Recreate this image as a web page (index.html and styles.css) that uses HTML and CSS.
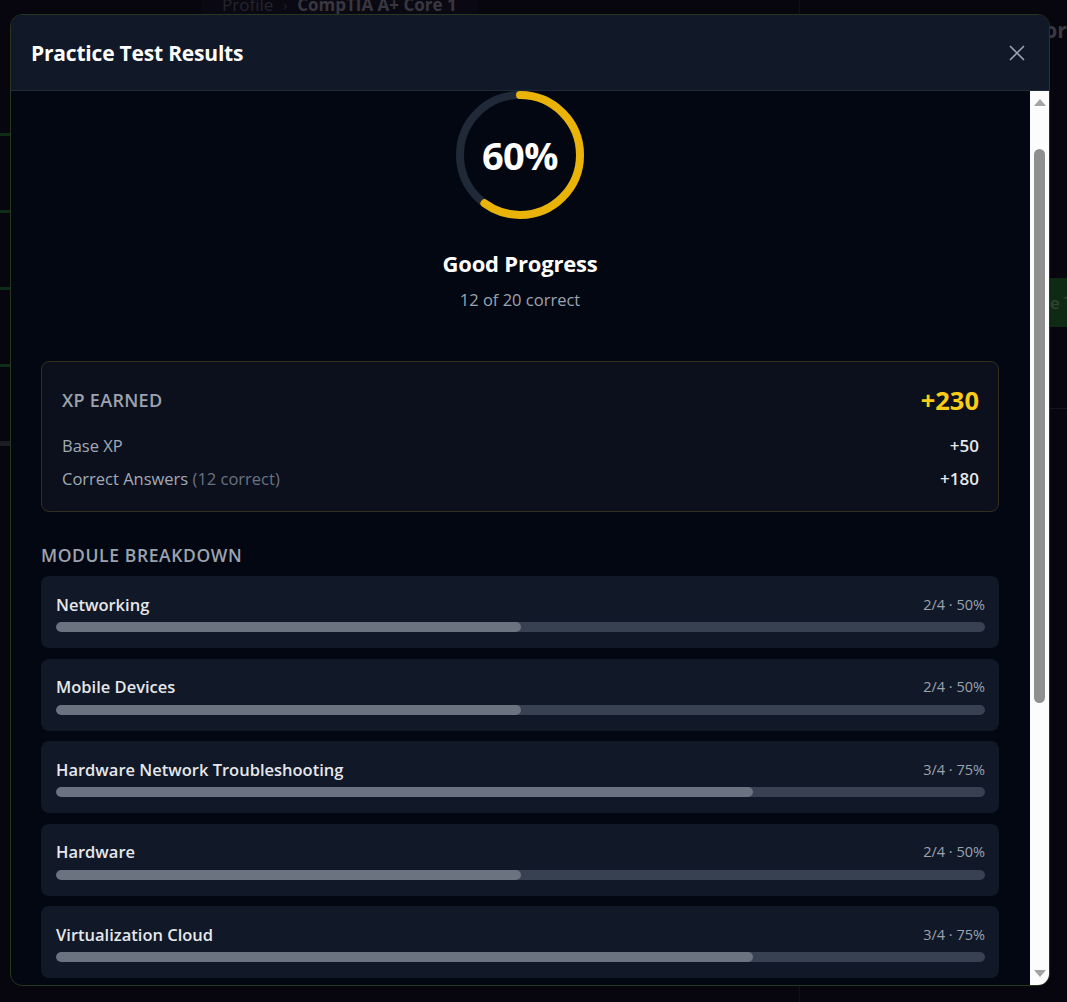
FILE: index.html
```html
<!DOCTYPE html>
<html lang="en">
<head>
<meta charset="utf-8">
<title>Practice Test Results</title>
<link rel="stylesheet" href="styles.css">
</head>
<body>
<div class="page">
  <aside class="side">
    <div class="side-item"><span class="side-bar green"></span></div>
    <div class="side-item"><span class="side-bar green"></span></div>
    <div class="side-item"><span class="side-bar green"></span></div>
    <div class="side-item"><span class="side-bar green"></span></div>
    <div class="side-item"><span class="side-bar gray"></span></div>
  </aside>
  <main class="main">
    <div class="crumbs">
      <span class="crumb-muted">Profile</span>
      <span class="crumb-sep">›</span>
      <span class="crumb-strong">CompTIA A+ Core 1</span>
    </div>
  </main>
  <aside class="right">
    <div class="right-title">Score</div>
    <div class="right-btn">Practice Test</div>
    <div class="right-line"></div>
  </aside>
</div>

<div class="modal">
  <header class="modal-head">
    <h2 class="modal-title">Practice Test Results</h2>
    <button class="close" aria-label="Close">
      <svg width="16" height="16" viewBox="0 0 16 16"><path d="M1.5 1.5L14.5 14.5M14.5 1.5L1.5 14.5" stroke="#9ca3af" stroke-width="1.7" stroke-linecap="round" fill="none"/></svg>
    </button>
  </header>
  <div class="modal-body">
    <div class="content">
      <section class="hero">
        <div class="ring">
          <svg width="128" height="128" viewBox="0 0 128 128">
            <circle cx="64" cy="64" r="60" fill="none" stroke="#1f2937" stroke-width="8"/>
            <circle cx="64" cy="64" r="60" fill="none" stroke="#eab308" stroke-width="8" stroke-linecap="round" stroke-dasharray="226.2 400" transform="rotate(-90 64 64)"/>
          </svg>
          <span class="ring-label">60%</span>
        </div>
        <h3 class="hero-title">Good Progress</h3>
        <p class="hero-sub">12 of 20 correct</p>
      </section>

      <section class="xp-card">
        <div class="xp-head">
          <span class="xp-label">XP Earned</span>
          <span class="xp-total">+230</span>
        </div>
        <div class="xp-rows">
          <div class="xp-row"><span>Base XP</span><span class="xp-val">+50</span></div>
          <div class="xp-row"><span>Correct Answers <span class="muted">(12 correct)</span></span><span class="xp-val">+180</span></div>
        </div>
      </section>

      <section class="modules">
        <h4 class="section-title">Module Breakdown</h4>
        <div class="mod-list">
          <div class="mod">
            <div class="mod-top"><span class="mod-name">Networking</span><span class="mod-stat">2/4 · 50%</span></div>
            <div class="bar"><div class="fill" style="width:50%"></div></div>
          </div>
          <div class="mod">
            <div class="mod-top"><span class="mod-name">Mobile Devices</span><span class="mod-stat">2/4 · 50%</span></div>
            <div class="bar"><div class="fill" style="width:50%"></div></div>
          </div>
          <div class="mod">
            <div class="mod-top"><span class="mod-name">Hardware Network Troubleshooting</span><span class="mod-stat">3/4 · 75%</span></div>
            <div class="bar"><div class="fill" style="width:75%"></div></div>
          </div>
          <div class="mod">
            <div class="mod-top"><span class="mod-name">Hardware</span><span class="mod-stat">2/4 · 50%</span></div>
            <div class="bar"><div class="fill" style="width:50%"></div></div>
          </div>
          <div class="mod">
            <div class="mod-top"><span class="mod-name">Virtualization Cloud</span><span class="mod-stat">3/4 · 75%</span></div>
            <div class="bar"><div class="fill" style="width:75%"></div></div>
          </div>
          <div class="mod">
            <div class="mod-top"><span class="mod-name">Operational Procedures</span><span class="mod-stat">2/4 · 50%</span></div>
            <div class="bar"><div class="fill" style="width:50%"></div></div>
          </div>
        </div>
      </section>
    </div>
    <div class="scrollbar" aria-hidden="true">
      <div class="sb-btn"><span class="tri-up"></span></div>
      <div class="sb-track"><div class="sb-thumb"></div></div>
      <div class="sb-btn"><span class="tri-down"></span></div>
    </div>
  </div>
</div>
</body>
</html>
```

FILE: styles.css
```css
* { box-sizing: border-box; }

html, body {
  margin: 0;
  padding: 0;
}

body {
  width: 1067px;
  height: 1002px;
  overflow: hidden;
  background: #07060e;
  font-family: "Open Sans", "Noto Sans", sans-serif;
  color: #e5e7eb;
}

/* ---------- background page (dimmed) ---------- */
.page {
  display: flex;
  height: 1002px;
}

.side {
  width: 201px;
  flex: none;
  display: flex;
  flex-direction: column;
  padding-top: 133px;
  gap: 74px;
}

.side-item {
  height: 3px;
  display: flex;
}

.side-bar {
  display: block;
  height: 3px;
  width: 160px;
}

.side-bar.green { background: #0f2c17; }
.side-bar.gray { background: #1d1c23; height: 5px; }

.main {
  width: 599px;
  flex: none;
  border-right: 1px solid #111019;
}

.crumbs {
  width: 277px;
  height: 15px;
  background: #0a0913;
  padding-left: 21px;
  display: flex;
  align-items: flex-end;
  gap: 10px;
  font-size: 17px;
  line-height: 20px;
  overflow: hidden;
}

.crumb-muted { color: #25242e; }
.crumb-sep { color: #25242e; font-size: 13px; }
.crumb-strong { color: #38373f; font-weight: 700; }

.right {
  flex: 1;
  padding-top: 18px;
  display: flex;
  flex-direction: column;
}

.right-title {
  padding-left: 222px;
  font-size: 21px;
  font-weight: 700;
  color: #3a3940;
  line-height: 24px;
}

.right-btn {
  margin-top: 236px;
  margin-left: 160px;
  height: 49px;
  background: #0f2a13;
  color: #2f4531;
  font-weight: 600;
  font-size: 17px;
  display: flex;
  align-items: center;
  padding-left: 34px;
  white-space: nowrap;
}

.right-line {
  margin-top: 81px;
  height: 1px;
  background: #15141c;
}

/* ---------- modal ---------- */
.modal {
  position: fixed;
  left: 10px;
  top: 14px;
  width: 1040px;
  height: 972px;
  border: 1px solid #27361f;
  border-radius: 12px;
  background: #030712;
  overflow: hidden;
  display: flex;
  flex-direction: column;
}

.modal-head {
  flex: none;
  height: 76px;
  background: #111827;
  border-bottom: 1px solid #1f2937;
  display: flex;
  align-items: center;
  justify-content: space-between;
  padding: 0 24px 0 20px;
}

.modal-title {
  margin: 0;
  font-size: 21px;
  font-weight: 700;
  color: #ffffff;
  letter-spacing: -0.2px;
}

.close {
  border: 0;
  background: transparent;
  padding: 0;
  width: 16px;
  height: 16px;
  display: flex;
}

.modal-body {
  flex: 1;
  min-height: 0;
  display: flex;
}

.content {
  flex: 1;
  min-width: 0;
  overflow: hidden;
  padding: 0 31px 0 30px;
}

/* hero */
.hero {
  display: flex;
  flex-direction: column;
  align-items: center;
  margin-bottom: 49px;
}

.ring {
  display: grid;
  width: 128px;
  height: 128px;
}

.ring > svg,
.ring > .ring-label {
  grid-area: 1 / 1;
}

.ring-label {
  align-self: center;
  justify-self: center;
  font-size: 38px;
  font-weight: 700;
  color: #ffffff;
  letter-spacing: -0.5px;
  line-height: 1;
}

.hero-title {
  margin: 30px 0 0;
  font-size: 22px;
  line-height: 28px;
  font-weight: 700;
  color: #ffffff;
  letter-spacing: -0.2px;
}

.hero-sub {
  margin: 11px 0 0;
  font-size: 16.5px;
  line-height: 24px;
  color: #9ca3af;
}

/* xp card */
.xp-card {
  background: #0b101c;
  border: 1px solid #342e1c;
  border-radius: 8px;
  padding: 20px 19px 20px 20px;
}

.xp-head {
  height: 36px;
  display: flex;
  align-items: center;
  justify-content: space-between;
  margin-bottom: 16px;
}

.xp-label {
  font-size: 18px;
  font-weight: 600;
  color: #9ca3af;
  text-transform: uppercase;
  letter-spacing: 0.3px;
}

.xp-total {
  font-size: 25.5px;
  font-weight: 700;
  color: #facc15;
}

.xp-rows {
  display: flex;
  flex-direction: column;
  gap: 9px;
}

.xp-row {
  display: flex;
  justify-content: space-between;
  font-size: 16.5px;
  line-height: 24px;
  color: #a3a9b4;
}

.xp-val {
  font-weight: 600;
  color: #e5e7eb;
  font-size: 17px;
}

.muted { color: #6b7280; }

/* modules */
.modules {
  margin-top: 31px;
}

.section-title {
  margin: 0 0 9px;
  font-size: 17.5px;
  line-height: 24px;
  font-weight: 600;
  color: #9ca3af;
  text-transform: uppercase;
  letter-spacing: 0.6px;
}

.mod-list {
  display: flex;
  flex-direction: column;
  gap: 10.5px;
}

.mod {
  background: #111827;
  border-radius: 8px;
  padding: 16px 14px 16px 15px;
}

.mod-top {
  display: flex;
  justify-content: space-between;
  align-items: center;
  height: 24px;
}

.mod-name {
  font-size: 16.5px;
  font-weight: 600;
  color: #e5e7eb;
}

.mod-stat {
  font-size: 14.5px;
  color: #9ca3af;
}

.bar {
  margin-top: 6px;
  height: 10px;
  border-radius: 5px;
  background: #374151;
  overflow: hidden;
}

.fill {
  height: 100%;
  background: #6b7280;
  border-radius: 5px;
}

/* scrollbar */
.scrollbar {
  flex: none;
  width: 19px;
  background: #fcfcfc;
  display: flex;
  flex-direction: column;
}

.sb-btn {
  flex: none;
  height: 17px;
  display: flex;
  align-items: center;
  justify-content: center;
}

.tri-up {
  width: 0;
  height: 0;
  border-left: 6px solid transparent;
  border-right: 6px solid transparent;
  border-bottom: 7px solid #a3a3a3;
  margin-top: 5px;
}

.tri-down {
  width: 0;
  height: 0;
  border-left: 6px solid transparent;
  border-right: 6px solid transparent;
  border-top: 7px solid #a3a3a3;
  margin-top: -6px;
}

.sb-track {
  flex: 1;
  padding: 41px 4px 0 4px;
}

.sb-thumb {
  height: 554px;
  border-radius: 6px;
  background: #8f8f8f;
}
```
